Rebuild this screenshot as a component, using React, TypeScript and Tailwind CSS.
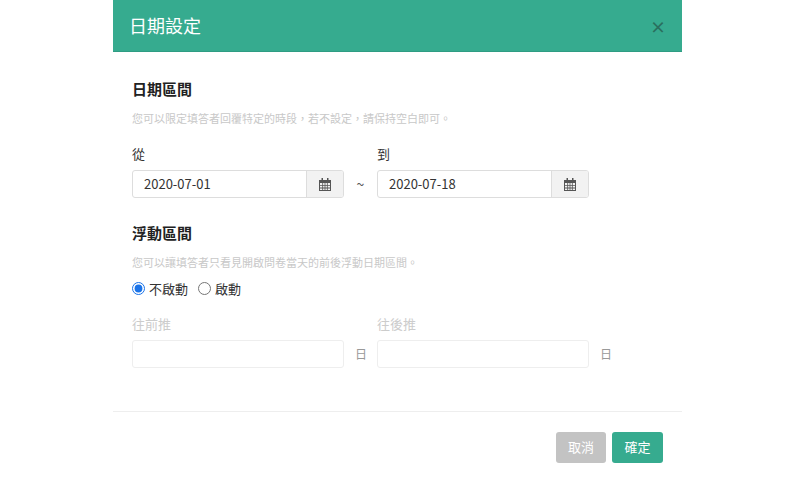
import React from "react";

const Cal = () => (
  <svg width="12" height="13" viewBox="0 0 12 13" fill="#555">
    <rect x="2.5" y="0" width="1.5" height="3" />
    <rect x="8" y="0" width="1.5" height="3" />
    <path d="M0 2h12v11H0z M1 5v7h10V5z" fillRule="evenodd" />
    <path d="M1 7.3h10v.8H1zM1 9.6h10v.8H1zM3.3 5h.8v7h-.8zM5.6 5h.8v7h-.8zM7.9 5h.8v7h-.8z" />
  </svg>
);

export default function App() {
  const font = { fontFamily: '"Noto Sans CJK TC", Roboto, sans-serif' };
  return (
    <div className="w-[800px] h-[487px] bg-white flex pl-[113px]" style={font}>
      <div className="w-[569px] h-full flex flex-col bg-white">
        <div className="h-[52px] bg-[#36ab8f] flex items-center justify-between px-[16px] border-b border-[#2f9c83]">
          <span className="text-white text-[18px]">日期設定</span>
          <span className="text-[#2a6f5e] text-[16px] font-bold">×</span>
        </div>
        <div className="px-[19px] pt-[26px] flex flex-col">
          <div className="text-[15px] font-bold text-[#222] leading-[22px]">日期區間</div>
          <div className="text-[11px] text-[#c8c8c8] mt-[10px] leading-[16px]">您可以限定填答者回覆特定的時段，若不設定，請保持空白即可。</div>
          <div className="flex mt-[19px] items-end">
            <div className="flex flex-col">
              <span className="text-[13px] text-[#333] leading-[18px]">從</span>
              <div className="flex mt-[7px] w-[212px] h-[28px] border border-[#ddd] rounded-[3px] overflow-hidden">
                <div className="flex-1 flex items-center px-[11px] text-[13px] text-[#333]">2020-07-01</div>
                <div className="w-[37px] bg-[#f2f2f2] border-l border-[#ddd] flex items-center justify-center"><Cal /></div>
              </div>
            </div>
            <div className="w-[33px] h-[28px] flex items-center justify-center text-[14px] text-[#555]">~</div>
            <div className="flex flex-col">
              <span className="text-[13px] text-[#333] leading-[18px]">到</span>
              <div className="flex mt-[7px] w-[212px] h-[28px] border border-[#ddd] rounded-[3px] overflow-hidden">
                <div className="flex-1 flex items-center px-[11px] text-[13px] text-[#333]">2020-07-18</div>
                <div className="w-[37px] bg-[#f2f2f2] border-l border-[#ddd] flex items-center justify-center"><Cal /></div>
              </div>
            </div>
          </div>
          <div className="text-[15px] font-bold text-[#222] leading-[22px] mt-[24px]">浮動區間</div>
          <div className="text-[11px] text-[#c8c8c8] mt-[10px] leading-[16px]">您可以讓填答者只看見開啟問卷當天的前後浮動日期區間。</div>
          <div className="flex items-center mt-[9px] text-[13px] text-[#333] gap-[4px]">
            <input type="radio" defaultChecked name="r" className="w-[13px] h-[13px] m-0 accent-[#1a73e8]" />
            <span className="mr-[6px]">不啟動</span>
            <input type="radio" name="r" className="w-[13px] h-[13px] m-0" />
            <span>啟動</span>
          </div>
          <div className="flex mt-[16px]">
            <div className="flex flex-col w-[245px]">
              <span className="text-[13px] text-[#ccc] leading-[18px]">往前推</span>
              <div className="flex items-center mt-[7px]">
                <div className="w-[212px] h-[28px] border border-[#eee] rounded-[3px]" />
                <span className="ml-[11px] text-[12px] text-[#999]">日</span>
              </div>
            </div>
            <div className="flex flex-col">
              <span className="text-[13px] text-[#ccc] leading-[18px]">往後推</span>
              <div className="flex items-center mt-[7px]">
                <div className="w-[212px] h-[28px] border border-[#eee] rounded-[3px]" />
                <span className="ml-[11px] text-[12px] text-[#999]">日</span>
              </div>
            </div>
          </div>
        </div>
        <div className="mt-[43px] border-t border-[#eee]" />
        <div className="flex justify-end gap-[6px] pr-[19px] pt-[20px]">
          <button className="w-[50px] h-[31px] rounded-[3px] bg-[#c3c3c3] text-white text-[13px]">取消</button>
          <button className="w-[51px] h-[31px] rounded-[3px] bg-[#36ab8f] text-white text-[13px]">確定</button>
        </div>
      </div>
    </div>
  );
}
